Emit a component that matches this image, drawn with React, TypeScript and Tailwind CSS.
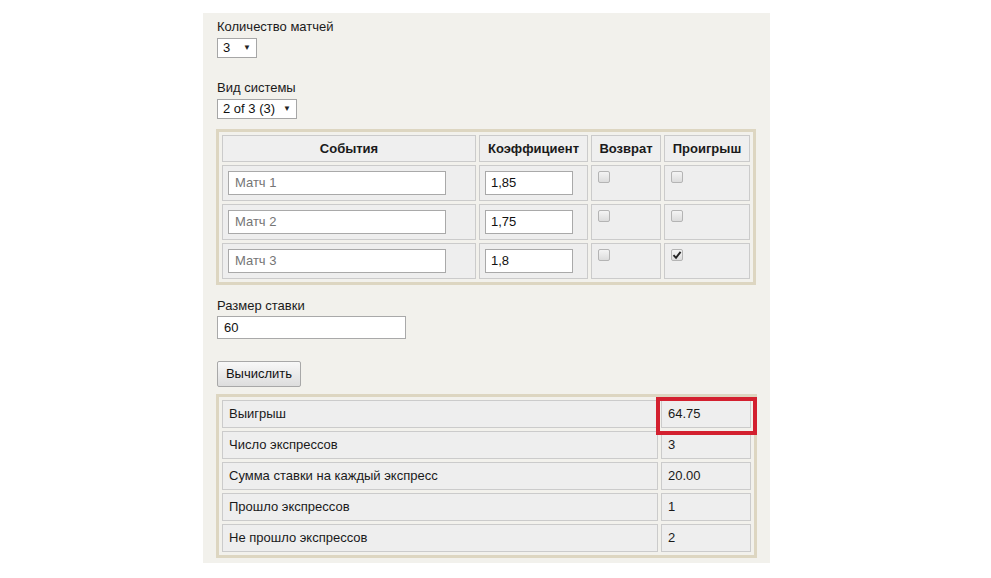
import React from "react";

const font = { fontFamily: '"Liberation Sans", Arial, sans-serif' };

function FakeSelect({ value, width }: { value: string; width: string }) {
  return (
    <div
      className={`${width} h-[20px] flex items-center justify-between bg-white border border-[#a6a6a6] pl-[5px] pr-[5px] text-[13px] text-[#111]`}
    >
      <span>{value}</span>
      <span className="text-[8px] leading-none text-[#222]">▼</span>
    </div>
  );
}

function Checkbox({ checked }: { checked?: boolean }) {
  return (
    <div className="w-[12px] h-[12px] rounded-[2px] border border-[#b4b4b4] bg-gradient-to-b from-[#f4f4f4] to-[#dcdcdc] flex items-center justify-center">
      {checked && (
        <svg width="10" height="10" viewBox="0 0 10 10">
          <path d="M1.5 5.2 L4 7.8 L8.6 1.8" fill="none" stroke="#222" strokeWidth="1.9" />
        </svg>
      )}
    </div>
  );
}

const cell = "border border-[#cbcbcb] bg-[#eeeeee]";

export default function App() {
  const rows = [
    { name: "Матч 1", k: "1,85", lose: false },
    { name: "Матч 2", k: "1,75", lose: false },
    { name: "Матч 3", k: "1,8", lose: true },
  ];
  const results = [
    ["Выигрыш", "64.75"],
    ["Число экспрессов", "3"],
    ["Сумма ставки на каждый экспресс", "20.00"],
    ["Прошло экспрессов", "1"],
    ["Не прошло экспрессов", "2"],
  ];
  return (
    <div className="w-[991px] h-[578px] bg-white overflow-hidden pt-[13px]" style={font}>
      <div className="ml-[203px] w-[567px] h-[550px] bg-[#f2f1ec] pl-[14px] pt-[6px] text-[13px] text-[#1a1a1a]">
        <div className="leading-[16px]">Количество матчей</div>
        <div className="mt-[3px]">
          <FakeSelect value="3" width="w-[40px]" />
        </div>
        <div className="mt-[22px] leading-[16px]">Вид системы</div>
        <div className="mt-[3px]">
          <FakeSelect value="2 of 3 (3)" width="w-[80px]" />
        </div>

        <table className="mt-[10px] w-[540px] table-fixed border-separate border-spacing-[3px] border-[3px] border-[#ddd6c1] -ml-[1px]">
          <thead>
            <tr className="h-[27px]">
              <th className={`${cell} w-[254px] bg-[#efefef] font-bold text-[13px] text-center`}>События</th>
              <th className={`${cell} w-[109px] bg-[#efefef] font-bold text-[13px] text-center`}>Коэффициент</th>
              <th className={`${cell} w-[70px] bg-[#efefef] font-bold text-[13px] text-center`}>Возврат</th>
              <th className={`${cell} bg-[#efefef] font-bold text-[13px] text-center`}>Проигрыш</th>
            </tr>
          </thead>
          <tbody>
            {rows.map((r) => (
              <tr key={r.name} className="h-[36px]">
                <td className={`${cell} pl-[5px] pr-[5px] align-middle`}>
                  <div className="w-[218px] h-[24px] bg-white border border-[#a9a9a9] flex items-center pl-[6px] text-[13px] text-[#757575]">
                    {r.name}
                  </div>
                </td>
                <td className={`${cell} pl-[5px] align-middle`}>
                  <div className="w-[88px] h-[24px] bg-white border border-[#a9a9a9] flex items-center pl-[5px] text-[13px] text-[#111]">
                    {r.k}
                  </div>
                </td>
                <td className={`${cell} align-top pl-[6px] pt-[5px]`}>
                  <Checkbox />
                </td>
                <td className={`${cell} align-top pl-[6px] pt-[5px]`}>
                  <Checkbox checked={r.lose} />
                </td>
              </tr>
            ))}
          </tbody>
        </table>

        <div className="mt-[13px] leading-[16px]">Размер ставки</div>
        <div className="mt-[2px] w-[189px] h-[23px] bg-white border border-[#a9a9a9] flex items-center pl-[6px] text-[13px] text-[#111]">
          60
        </div>
        <div className="mt-[22px] w-[84px] h-[26px] border border-[#a8a8a8] rounded-[2px] bg-gradient-to-b from-[#f8f8f8] to-[#dddddd] flex items-center justify-center text-[13px] text-[#111]">
          Вычислить
        </div>

        <table className="mt-[7px] w-[541px] table-fixed border-separate border-spacing-[3px] border-[3px] border-[#ddd6c1] -ml-[1px]">
          <tbody>
            {results.map(([label, value], i) => (
              <tr key={label} className="h-[28px]">
                <td className={`${cell} pl-[6px] text-[13px]`}>{label}</td>
                <td className={`${cell} w-[90px] pl-[6px] text-[13px] relative`}>
                  {value}
                  {i === 0 && (
                    <div className="absolute z-10 left-[-6px] top-[-4px] w-[101px] h-[38px] border-[4px] border-[#d3202f]" />
                  )}
                </td>
              </tr>
            ))}
          </tbody>
        </table>
      </div>
    </div>
  );
}
